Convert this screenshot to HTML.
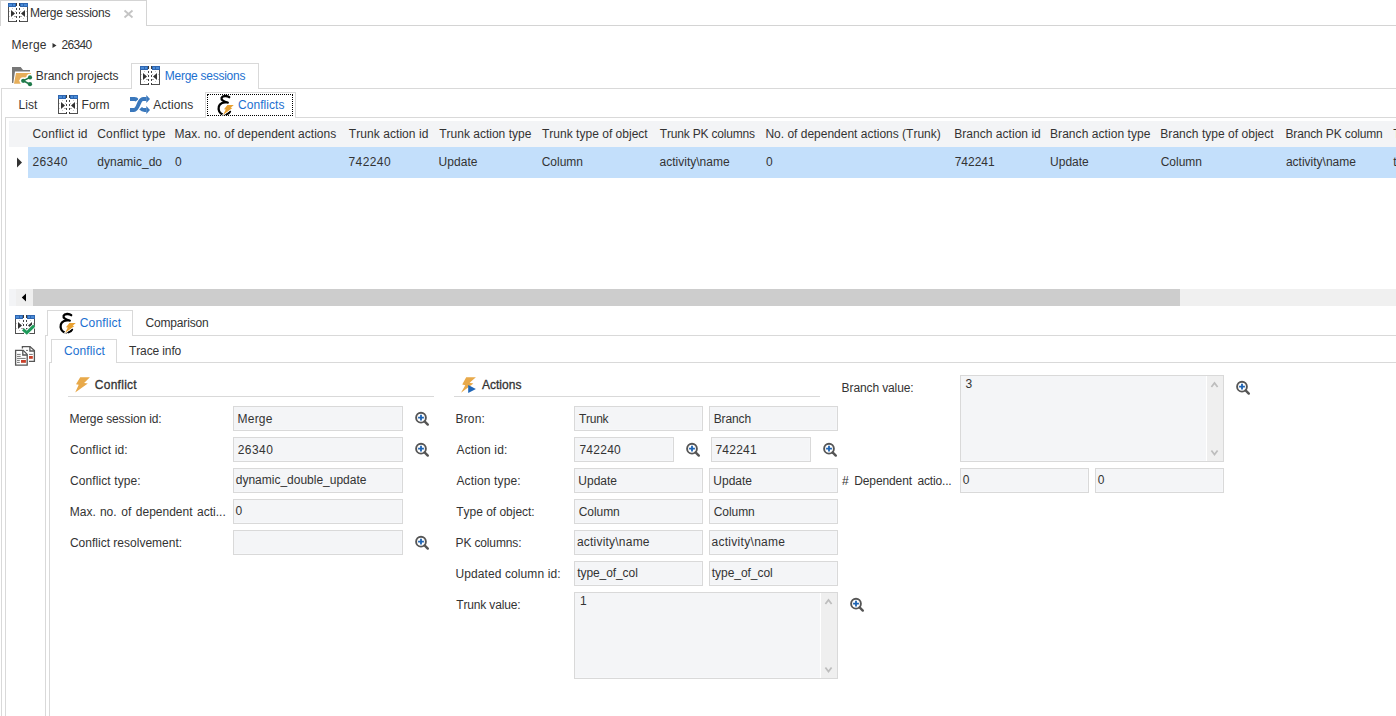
<!DOCTYPE html>
<html><head><meta charset="utf-8"><title>Merge sessions</title>
<style>
:root{--ln:#d9d9d9;--ln2:#d4d4d4;--hdr:#f3f4f6;--sel:#c3dffb;--txt:#333333;--blue:#1c70d0;--inpbg:#f4f5f7;--inpbd:#d9d9d9}
html,body{margin:0;padding:0}
body{width:1396px;height:716px;overflow:hidden;position:relative;background:#fff;font-family:"Liberation Sans",sans-serif;font-size:12px;color:var(--txt)}
.t{position:absolute;white-space:nowrap;line-height:14px;font-kerning:none}
.blue{color:var(--blue)}
.bold{-webkit-text-stroke:0.3px var(--txt);letter-spacing:0.1px}
.b{position:absolute}
.i{position:absolute;overflow:visible}
.inp{position:absolute;background:var(--inpbg);border:1px solid var(--inpbd);box-shadow:inset -1px -1px 0 #f6f7f9}
</style></head><body>
<svg width="0" height="0" style="position:absolute">
<defs>
<g id="mergeg"><g shape-rendering="crispEdges"><rect x="0" y="0" width="8" height="4" fill="#2f66b0"/><rect x="1" y="1" width="3" height="2" fill="#4a8cd8"/><rect x="5" y="1" width="2" height="2" fill="#4a8cd8"/><rect x="8" y="0" width="1" height="3" fill="#3a3a3a"/><rect x="0" y="4" width="1" height="15" fill="#505050"/><rect x="0" y="18" width="9" height="1" fill="#505050"/><rect x="8" y="17" width="1" height="2" fill="#3a3a3a"/><rect x="8" y="5" width="1" height="2" fill="#444"/><rect x="8" y="9" width="1" height="2" fill="#444"/><rect x="8" y="13" width="1" height="2" fill="#444"/><rect x="4" y="5" width="1" height="1" fill="#c8c8c8"/><rect x="4" y="15" width="1" height="1" fill="#c8c8c8"/><rect x="1" y="8" width="1" height="1" fill="#c8c8c8"/><rect x="1" y="13" width="1" height="1" fill="#c8c8c8"/><rect x="6" y="13" width="2" height="1" fill="#aaa"/><rect x="7" y="8" width="1" height="1" fill="#bbb"/><rect x="12" y="0" width="8" height="4" fill="#2f66b0"/><rect x="16" y="1" width="3" height="2" fill="#4a8cd8"/><rect x="13" y="1" width="2" height="2" fill="#4a8cd8"/><rect x="11" y="0" width="1" height="3" fill="#3a3a3a"/><rect x="19" y="4" width="1" height="15" fill="#505050"/><rect x="11" y="18" width="9" height="1" fill="#505050"/><rect x="11" y="17" width="1" height="2" fill="#3a3a3a"/><rect x="11" y="5" width="1" height="2" fill="#444"/><rect x="11" y="9" width="1" height="2" fill="#444"/><rect x="11" y="13" width="1" height="2" fill="#444"/><rect x="15" y="5" width="1" height="1" fill="#c8c8c8"/><rect x="15" y="15" width="1" height="1" fill="#c8c8c8"/><rect x="18" y="8" width="1" height="1" fill="#c8c8c8"/><rect x="18" y="13" width="1" height="1" fill="#c8c8c8"/><rect x="12" y="13" width="2" height="1" fill="#aaa"/><rect x="12" y="8" width="1" height="1" fill="#bbb"/></g><path d="M3 7 L7 10.5 L3 14Z" fill="#333"/><path d="M17 7 L13 10.5 L17 14Z" fill="#333"/></g>
</defs>
</svg>
<svg width="0" height="0" style="position:absolute"><defs>
<symbol id="merge" viewBox="0 0 24 24"><use href="#mergeg"/></symbol>
<symbol id="mergecheck" viewBox="0 0 24 24"><g transform="translate(2,3)"><use href="#mergeg"/></g>
  <path d="M10 17.3 L13.8 20.8 L21.2 13.6" stroke="#fff" stroke-width="4.6" fill="none"/><path d="M10 17.3 L13.8 20.8 L21.2 13.6" stroke="#1e9a5a" stroke-width="3" fill="none"/></symbol>
<symbol id="folder" viewBox="0 0 24 24">
  <path d="M2 3 H10.7 L13 6 H20 V7.6 H5 L3.3 19 H2Z" fill="#777"/>
  <path d="M6 9 H21 V10.5 L18 19.8 H4Z" fill="#e6ae5a"/>
  <path d="M20 13.4 L13.2 16.8 L20 20.2" stroke="#fff" stroke-width="4" fill="none"/>
  <circle cx="20" cy="13.4" r="3.6" fill="#fff"/><circle cx="13.2" cy="16.8" r="3.6" fill="#fff"/><circle cx="20" cy="20.2" r="3.4" fill="#fff"/>
  <path d="M20 13.4 L13.2 16.8 L20 20.2" stroke="#1f7a4a" stroke-width="1.6" fill="none"/>
  <circle cx="20" cy="13.4" r="2.1" fill="#1f7a4a"/><circle cx="13.2" cy="16.8" r="2.1" fill="#1f7a4a"/><circle cx="20" cy="20.2" r="2.1" fill="#1f7a4a"/>
</symbol>
<symbol id="shuffle" viewBox="0 0 24 24">
  <path d="M4 7 H8.5 Q10.3 7 11.2 8.3" stroke="#3a78bc" stroke-width="3.8" fill="none"/>
  <path d="M14.6 16.2 Q16.3 18 18.5 18 H20.5" stroke="#3a78bc" stroke-width="3.8" fill="none"/>
  <path d="M4 18 H8 C12.5 18 12.5 7 17 7 H20.5" stroke="#fff" stroke-width="5.4" fill="none"/>
  <path d="M4 18 H8 C12.5 18 12.5 7 17 7 H20.5" stroke="#3a78bc" stroke-width="3.8" fill="none"/>
  <path d="M20.3 3 L24 7 L20.3 11Z" fill="#3a78bc"/>
  <path d="M20.3 14 L24 18 L20.3 22Z" fill="#3a78bc"/>
</symbol>
<symbol id="eps" viewBox="0 0 24 24">
  <path d="M17.2 5.2 C15.2 3.4 10.6 3.6 9.6 5.8 C9 7.8 11.5 10 15.8 10.6 M13 10.4 C8.4 10.6 6.2 13.6 6.6 17.2 C7 20.6 9.6 22.6 12.4 22.4 M14.6 22.2 C16.4 21.6 17.6 20.6 18 19.6" stroke="#000" stroke-width="2.3" fill="none" stroke-linecap="round"/>
  <path d="M15.4 13 H21.8 L18.6 15.8 L20.4 16.1 L11 22.9 L13.8 17.5 L12 17.3Z" fill="#fff" stroke="#fff" stroke-width="1.6" stroke-linejoin="round"/>
  <path d="M15.4 13 H21.8 L18.6 15.8 L20.4 16.1 L11 22.9 L13.8 17.5 L12 17.3Z" fill="#e8a030"/>
</symbol>
<symbol id="bolt" viewBox="0 0 24 24">
  <path d="M8.2 3.2 H17.9 L12.1 8.9 L15.8 9.4 L3.2 18.6 L6.7 10.7 L4 10.2Z" fill="#e8a94a"/>
</symbol>
<symbol id="boltplay" viewBox="0 0 24 24">
  <path d="M10.2 3.3 H19.9 L13.6 8.7 L17.4 9.6 L5 18.8 L9.3 11.3 L6.2 10.5Z" fill="#e8a94a"/>
  <path d="M12.2 11 L19.9 15 L12.2 19Z" fill="#2166b6"/>
</symbol>
<symbol id="zoom" viewBox="0 0 24 24">
  <circle cx="11" cy="9.7" r="4.9" stroke="#555" stroke-width="1.9" fill="#fff"/>
  <path d="M14.6 13.4 L17.8 16.6" stroke="#555" stroke-width="2.4" stroke-linecap="round"/>
  <path d="M8.1 9.7 H13.9 M11 6.8 V12.6" stroke="#1e64b4" stroke-width="1.8"/>
</symbol>
<symbol id="docs" viewBox="0 0 24 24">
  <path d="M9.4 4.4 V2.6 H17 L21.4 6.6 V17.4 H16" stroke="#555" stroke-width="1.3" fill="none"/>
  <path d="M16.9 2.6 V7 H21.4" stroke="#555" stroke-width="1.3" fill="none"/>
  <path d="M13 6.4 H15 M16 10.4 H19.8" stroke="#777" stroke-width="1"/>
  <rect x="16" y="12" width="3.8" height="2.8" fill="#c8402a"/>
  <path d="M2.6 6.4 H10.2 L14.2 10.4 V21.2 H2.6Z" stroke="#555" stroke-width="1.3" fill="#fff"/>
  <path d="M9.8 6.4 V11 H14.2" stroke="#555" stroke-width="1.3" fill="none"/>
  <path d="M4 10.4 H7.7 M4 12.4 H7.7 M4 14.4 H12.7 M4 16.4 H6.8 M4 18.4 H6.8" stroke="#777" stroke-width="1"/>
  <rect x="8" y="16" width="4.9" height="2.8" fill="#c8402a"/>
</symbol>
<symbol id="chev" viewBox="0 0 16 84">
  <path d="M4.4 10 L7.5 6 L10.6 10" stroke="#bdbdbd" stroke-width="1.7" fill="none"/>
  <path d="M4.4 73.6 L7.5 77.6 L10.6 73.6" stroke="#bdbdbd" stroke-width="1.7" fill="none"/>
</symbol>
</defs></svg>
<div class="b" style="left:0px;top:0px;width:147px;height:1px;background:var(--ln2)"></div>
<div class="b" style="left:0px;top:0px;width:1px;height:26px;background:var(--ln2)"></div>
<div class="b" style="left:146px;top:0px;width:1px;height:26px;background:var(--ln2)"></div>
<div class="b" style="left:146px;top:25px;width:1250px;height:1px;background:var(--ln2)"></div>
<svg class="i" style="left:8px;top:3px" width="24" height="24"><use href="#merge"/></svg>
<div class="t " style="left:29.92px;top:6px;letter-spacing:-0.271px;">Merge sessions</div>
<svg class="i" style="left:123px;top:9px" width="12" height="10"><path d="M1.5 1.5 L9.5 8.5 M9.5 1.5 L1.5 8.5" stroke="#c4c4c4" stroke-width="1.8"/></svg>
<div class="t " style="left:11.62px;top:38px;letter-spacing:0.201px;">Merge</div>
<svg class="i" style="left:52px;top:43px" width="5" height="5"><path d="M0.5 0 L4.5 2.5 L0.5 5Z" fill="#333"/></svg>
<div class="t " style="left:61.4px;top:38px;letter-spacing:-0.624px;">26340</div>
<svg class="i" style="left:10px;top:64px" width="24" height="24"><use href="#folder"/></svg>
<div class="t " style="left:35.82px;top:69px;letter-spacing:-0.054px;">Branch projects</div>
<div class="b" style="left:131px;top:63px;width:128px;height:1px;background:var(--ln)"></div>
<div class="b" style="left:131px;top:63px;width:1px;height:26px;background:var(--ln)"></div>
<div class="b" style="left:258px;top:63px;width:1px;height:26px;background:var(--ln)"></div>
<div class="b" style="left:1px;top:88px;width:131px;height:1px;background:var(--ln)"></div>
<div class="b" style="left:258px;top:88px;width:1138px;height:1px;background:var(--ln)"></div>
<div class="b" style="left:1px;top:88px;width:1px;height:628px;background:var(--ln)"></div>
<svg class="i" style="left:140px;top:66px" width="24" height="24"><use href="#merge"/></svg>
<div class="t blue" style="left:164.82px;top:69px;letter-spacing:-0.263px;">Merge sessions</div>
<div class="t " style="left:18.62px;top:98px;letter-spacing:-0.001px;">List</div>
<svg class="i" style="left:58px;top:95px" width="24" height="24"><use href="#merge"/></svg>
<div class="t " style="left:81.62px;top:98px;letter-spacing:-0.007px;">Form</div>
<svg class="i" style="left:126px;top:92px" width="24" height="24"><use href="#shuffle"/></svg>
<div class="t " style="left:153.28px;top:98px;letter-spacing:0.101px;">Actions</div>
<div class="b" style="left:205px;top:92px;width:91px;height:1px;background:var(--ln)"></div>
<div class="b" style="left:205px;top:92px;width:1px;height:26px;background:var(--ln)"></div>
<div class="b" style="left:295px;top:92px;width:1px;height:26px;background:var(--ln)"></div>
<div class="b" style="left:5px;top:117px;width:201px;height:1px;background:var(--ln)"></div>
<div class="b" style="left:295px;top:117px;width:1101px;height:1px;background:var(--ln)"></div>
<div class="b" style="left:5px;top:117px;width:1px;height:599px;background:var(--ln)"></div>
<div class="b" style="left:207px;top:94px;width:84px;height:20px;border:1px dotted #000"></div>
<svg class="i" style="left:212px;top:92px" width="24" height="24"><use href="#eps"/></svg>
<div class="t blue" style="left:237.99px;top:98px;letter-spacing:0.054px;">Conflicts</div>
<div class="b" style="left:9px;top:121px;width:1387px;height:26px;background:var(--hdr)"></div>
<div class="b" style="left:28px;top:147px;width:1368px;height:31px;background:var(--sel)"></div>
<svg class="i" style="left:16px;top:157px" width="8" height="11"><path d="M1 0.5 L6 5.5 L1 10.5Z" fill="#333"/></svg>
<div class="t " style="left:32.39px;top:127px;letter-spacing:0.240px;">Conflict id</div>
<div class="t " style="left:32.4px;top:155px;letter-spacing:0.426px;">26340</div>
<div class="t " style="left:97.19px;top:127px;letter-spacing:0.193px;">Conflict type</div>
<div class="t " style="left:97.3px;top:155px;letter-spacing:0.000px;">dynamic_do</div>
<div class="t " style="left:174.52px;top:127px;letter-spacing:0.034px;">Max. no. of dependent actions</div>
<div class="t " style="left:175.03px;top:155px;">0</div>
<div class="t " style="left:348.83px;top:127px;letter-spacing:0.060px;">Trunk action id</div>
<div class="t " style="left:348.48px;top:155px;letter-spacing:0.408px;">742240</div>
<div class="t " style="left:439.23px;top:127px;letter-spacing:0.004px;">Trunk action type</div>
<div class="t " style="left:438.57px;top:155px;letter-spacing:0.053px;">Update</div>
<div class="t " style="left:542.03px;top:127px;letter-spacing:0.014px;">Trunk type of object</div>
<div class="t " style="left:541.69px;top:155px;">Column</div>
<div class="t " style="left:659.83px;top:127px;letter-spacing:-0.189px;">Trunk PK columns</div>
<div class="t " style="left:659.59px;top:155px;">activity\name</div>
<div class="t " style="left:765.42px;top:127px;letter-spacing:-0.003px;">No. of dependent actions (Trunk)</div>
<div class="t " style="left:765.93px;top:155px;">0</div>
<div class="t " style="left:954.32px;top:127px;letter-spacing:0.027px;">Branch action id</div>
<div class="t " style="left:954.68px;top:155px;">742241</div>
<div class="t " style="left:1050.02px;top:127px;letter-spacing:0.060px;">Branch action type</div>
<div class="t " style="left:1050.07px;top:155px;">Update</div>
<div class="t " style="left:1160.32px;top:127px;letter-spacing:0.032px;">Branch type of object</div>
<div class="t " style="left:1160.69px;top:155px;">Column</div>
<div class="t " style="left:1285.42px;top:127px;letter-spacing:-0.134px;">Branch PK column</div>
<div class="t " style="left:1285.89px;top:155px;">activity\name</div>
<div class="t " style="left:1393.23px;top:127px;">Trunk updated column</div>
<div class="t " style="left:1393.32px;top:155px;">type_of_col</div>
<div class="b" style="left:9px;top:289px;width:7px;height:17px;background:#f3f4f6"></div>
<div class="b" style="left:16px;top:289px;width:17px;height:17px;background:#efefef"></div>
<svg class="i" style="left:21px;top:293px" width="6" height="9"><path d="M5 0.5 L0.8 4.5 L5 8.5Z" fill="#000"/></svg>
<div class="b" style="left:33px;top:289px;width:1147px;height:17px;background:#cdcdcd"></div>
<div class="b" style="left:1180px;top:289px;width:216px;height:17px;background:#f0f0f0"></div>
<svg class="i" style="left:13px;top:312px" width="24" height="24"><use href="#mergecheck"/></svg>
<svg class="i" style="left:13px;top:344px" width="24" height="24"><use href="#docs"/></svg>
<div class="b" style="left:47px;top:310px;width:86px;height:1px;background:var(--ln)"></div>
<div class="b" style="left:47px;top:310px;width:1px;height:26px;background:var(--ln)"></div>
<div class="b" style="left:132px;top:310px;width:1px;height:26px;background:var(--ln)"></div>
<div class="b" style="left:45px;top:335px;width:3px;height:1px;background:var(--ln)"></div>
<div class="b" style="left:132px;top:335px;width:1264px;height:1px;background:var(--ln)"></div>
<div class="b" style="left:45px;top:335px;width:1px;height:381px;background:var(--ln)"></div>
<svg class="i" style="left:54px;top:310px" width="24" height="24"><use href="#eps"/></svg>
<div class="t blue" style="left:79.69px;top:316px;letter-spacing:0.198px;">Conflict</div>
<div class="t " style="left:145.39px;top:316px;letter-spacing:-0.145px;">Comparison</div>
<div class="b" style="left:51px;top:339px;width:66px;height:1px;background:var(--ln)"></div>
<div class="b" style="left:51px;top:339px;width:1px;height:24px;background:var(--ln)"></div>
<div class="b" style="left:116px;top:339px;width:1px;height:24px;background:var(--ln)"></div>
<div class="b" style="left:49px;top:362px;width:3px;height:1px;background:var(--ln)"></div>
<div class="b" style="left:116px;top:362px;width:1280px;height:1px;background:var(--ln)"></div>
<div class="b" style="left:49px;top:362px;width:1px;height:354px;background:var(--ln)"></div>
<div class="t blue" style="left:63.89px;top:344px;letter-spacing:0.141px;">Conflict</div>
<div class="t " style="left:129.03px;top:344px;letter-spacing:-0.120px;">Trace info</div>
<svg class="i" style="left:72px;top:374px" width="24" height="24"><use href="#bolt"/></svg>
<div class="t bold" style="left:94.79px;top:378px;letter-spacing:0.269px;">Conflict</div>
<div class="b" style="left:68px;top:396px;width:366px;height:1px;background:var(--ln)"></div>
<div class="t " style="left:69.52px;top:412px;letter-spacing:-0.116px;">Merge session id:</div>
<div class="inp" style="left:233px;top:406px;width:168px;height:23px"></div>
<div class="t " style="left:237.62px;top:412px;letter-spacing:0.176px;">Merge</div>
<svg class="i" style="left:410px;top:408px" width="24" height="24"><use href="#zoom"/></svg>
<div class="t " style="left:69.89px;top:443px;letter-spacing:0.162px;">Conflict id:</div>
<div class="inp" style="left:233px;top:437px;width:168px;height:23px"></div>
<div class="t " style="left:237.7px;top:443px;letter-spacing:0.451px;">26340</div>
<svg class="i" style="left:410px;top:439px" width="24" height="24"><use href="#zoom"/></svg>
<div class="t " style="left:69.89px;top:474px;letter-spacing:0.111px;">Conflict type:</div>
<div class="inp" style="left:233px;top:468px;width:168px;height:23px"></div>
<div class="t " style="left:235.8px;top:473px;letter-spacing:-0.007px;">dynamic_double_update</div>
<div class="t " style="left:69.72px;top:505px;">Max.</div>
<div class="t " style="left:99.9px;top:505px;">no.</div>
<div class="t " style="left:121.3px;top:505px;">of</div>
<div class="t " style="left:135.8px;top:505px;">dependent</div>
<div class="t " style="left:197.09px;top:505px;">acti...</div>
<div class="inp" style="left:233px;top:499px;width:168px;height:23px"></div>
<div class="t " style="left:235.53px;top:504px;">0</div>
<div class="t " style="left:69.89px;top:536px;letter-spacing:0.013px;">Conflict resolvement:</div>
<div class="inp" style="left:233px;top:530px;width:168px;height:23px"></div>
<svg class="i" style="left:410px;top:532px" width="24" height="24"><use href="#zoom"/></svg>
<svg class="i" style="left:456px;top:374px" width="24" height="24"><use href="#boltplay"/></svg>
<div class="t bold" style="left:481.88px;top:378px;letter-spacing:0.034px;">Actions</div>
<div class="b" style="left:454px;top:396px;width:366px;height:1px;background:var(--ln)"></div>
<div class="t " style="left:455.52px;top:412px;letter-spacing:0.150px;">Bron:</div>
<div class="t " style="left:456.48px;top:443px;letter-spacing:0.173px;">Action id:</div>
<div class="t " style="left:456.48px;top:474px;letter-spacing:0.129px;">Action type:</div>
<div class="t " style="left:456.23px;top:505px;letter-spacing:-0.017px;">Type of object:</div>
<div class="t " style="left:455.52px;top:536px;letter-spacing:-0.138px;">PK columns:</div>
<div class="t " style="left:455.57px;top:567px;letter-spacing:0.090px;">Updated column id:</div>
<div class="t " style="left:456.23px;top:598px;letter-spacing:-0.151px;">Trunk value:</div>
<div class="inp" style="left:574px;top:406px;width:127px;height:23px"></div>
<div class="inp" style="left:709px;top:406px;width:127px;height:23px"></div>
<div class="t " style="left:579.03px;top:412px;letter-spacing:-0.280px;">Trunk</div>
<div class="t " style="left:713.72px;top:412px;letter-spacing:-0.112px;">Branch</div>
<div class="inp" style="left:574px;top:437px;width:98px;height:23px"></div>
<svg class="i" style="left:681px;top:439px" width="24" height="24"><use href="#zoom"/></svg>
<div class="inp" style="left:711px;top:437px;width:98px;height:23px"></div>
<svg class="i" style="left:818px;top:439px" width="24" height="24"><use href="#zoom"/></svg>
<div class="t " style="left:579.38px;top:443px;letter-spacing:0.268px;">742240</div>
<div class="t " style="left:715.48px;top:443px;letter-spacing:0.232px;">742241</div>
<div class="inp" style="left:574px;top:468px;width:127px;height:23px"></div>
<div class="inp" style="left:709px;top:468px;width:127px;height:23px"></div>
<div class="t " style="left:578.37px;top:474px;letter-spacing:-0.007px;">Update</div>
<div class="t " style="left:713.37px;top:474px;letter-spacing:-0.007px;">Update</div>
<div class="inp" style="left:574px;top:499px;width:127px;height:23px"></div>
<div class="inp" style="left:709px;top:499px;width:127px;height:23px"></div>
<div class="t " style="left:578.69px;top:505px;letter-spacing:-0.052px;">Column</div>
<div class="t " style="left:713.69px;top:505px;letter-spacing:-0.052px;">Column</div>
<div class="inp" style="left:574px;top:530px;width:127px;height:23px"></div>
<div class="inp" style="left:709px;top:530px;width:127px;height:23px"></div>
<div class="t " style="left:576.89px;top:535px;letter-spacing:0.218px;">activity\name</div>
<div class="t " style="left:711.49px;top:535px;letter-spacing:0.293px;">activity\name</div>
<div class="inp" style="left:574px;top:561px;width:127px;height:23px"></div>
<div class="inp" style="left:709px;top:561px;width:127px;height:23px"></div>
<div class="t " style="left:577.22px;top:566px;letter-spacing:-0.079px;">type_of_col</div>
<div class="t " style="left:711.82px;top:566px;letter-spacing:-0.049px;">type_of_col</div>
<div class="inp" style="left:574px;top:592px;width:262px;height:85px"></div>
<div class="b" style="left:821px;top:593px;width:16px;height:85px;background:#efefef"></div>
<div class="b" style="left:820px;top:593px;width:1px;height:85px;background:#fff"></div>
<svg class="i" style="left:821px;top:594px" width="16" height="84"><use href="#chev"/></svg>
<div class="t " style="left:579.89px;top:594px;">1</div>
<svg class="i" style="left:845px;top:594px" width="24" height="24"><use href="#zoom"/></svg>
<div class="t " style="left:841.62px;top:381px;letter-spacing:-0.116px;">Branch value:</div>
<div class="inp" style="left:960px;top:375px;width:262px;height:85px"></div>
<div class="b" style="left:1207px;top:376px;width:16px;height:85px;background:#efefef"></div>
<div class="b" style="left:1206px;top:376px;width:1px;height:85px;background:#fff"></div>
<svg class="i" style="left:1207px;top:377px" width="16" height="84"><use href="#chev"/></svg>
<div class="t " style="left:965.54px;top:377px;">3</div>
<svg class="i" style="left:1231px;top:377px" width="24" height="24"><use href="#zoom"/></svg>
<div class="t " style="left:841.95px;top:474px;">#</div>
<div class="t " style="left:854.22px;top:474px;letter-spacing:-0.106px;">Dependent</div>
<div class="t " style="left:917.49px;top:474px;letter-spacing:-0.163px;">actio...</div>
<div class="inp" style="left:960px;top:468px;width:127px;height:23px"></div>
<div class="inp" style="left:1095px;top:468px;width:127px;height:23px"></div>
<div class="t " style="left:962.73px;top:473px;">0</div>
<div class="t " style="left:1097.73px;top:473px;">0</div>
</body></html>
